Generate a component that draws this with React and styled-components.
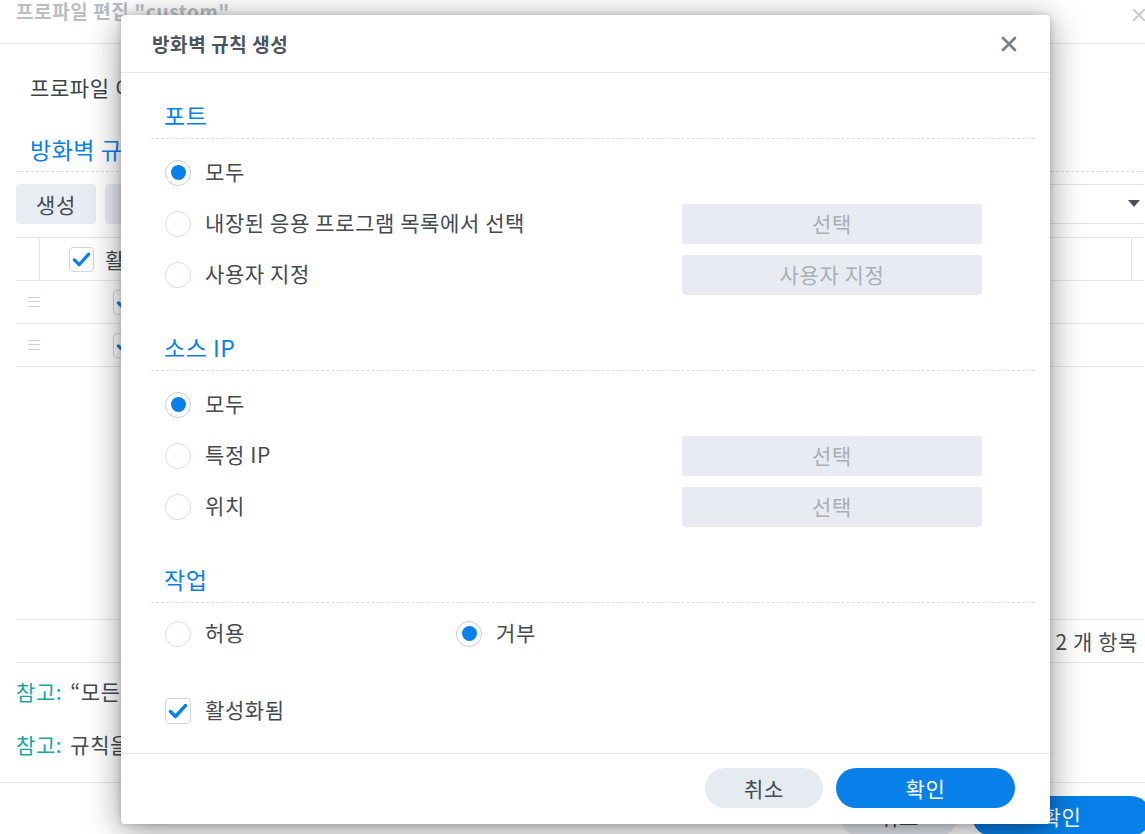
import React from "react";
import styled, { createGlobalStyle } from "styled-components";

const Global = createGlobalStyle`
  html, body { margin: 0; padding: 0; background: #fff; overflow: hidden; }
  body { font-family: "Noto Sans CJK KR", "Noto Sans", sans-serif; color: #434a52; }
  * { box-sizing: border-box; }
`;

const BLUE = "#0880ea";

/* ---------- background window ---------- */
const Page = styled.div`
  position: relative;
  width: 1145px;
  height: 834px;
  overflow: hidden;
`;

const BgWindow = styled.div`
  width: 1160px;
  height: 880px;
  display: flex;
  flex-direction: column;
`;

const BgHeader = styled.div`
  height: 44px;
  border-bottom: 1px solid #e3e7ec;
  display: flex;
  align-items: flex-start;
  justify-content: space-between;
  padding: 0 14px 0 16px;
`;

const BgTitle = styled.div`
  font-size: 19px;
  font-weight: 700;
  line-height: 22px;
  letter-spacing: 0.6px;
  color: #babec4;
`;

const BgClose = styled.div`
  margin-top: 8px;
  color: #c9cdd2;
  display: flex;
`;

const BgBody = styled.div`
  padding: 0 16px;
  display: flex;
  flex-direction: column;
`;

const BgText = styled.div`
  margin: 29px 0 0 14px;
  font-size: 21px;
  letter-spacing: 0.6px;
  line-height: 28px;
  color: #3c424a;
`;

const BgSectionTitle = styled.div`
  margin-top: 33px;
  padding-left: 14px;
  font-size: 23px;
  letter-spacing: 0.5px;
  line-height: 30px;
  height: 38px;
  color: ${BLUE};
  border-bottom: 1px dashed #d6dde5;
`;

const Toolbar = styled.div`
  margin-top: 12px;
  height: 40px;
  display: flex;
  align-items: center;
  gap: 9px;
`;

const ToolButton = styled.div`
  width: 80px;
  height: 40px;
  border-radius: 4px;
  background: #e8edf3;
  font-size: 21px;
  letter-spacing: 0.6px;
  color: #434a52;
  display: flex;
  align-items: center;
  justify-content: center;
`;

const SelectBox = styled.div`
  margin-left: auto;
  width: 260px;
  height: 40px;
  border-top: 1px solid #dfe4ea;
  border-bottom: 1px solid #dfe4ea;
  display: flex;
  align-items: center;
  justify-content: flex-end;
  padding-right: 4px;
  color: #50565d;
`;

const TableArea = styled.div`
  margin-top: 13px;
  height: 383px;
  border-top: 1px solid #dfe4ea;
  border-bottom: 1px solid #e3e7ec;
`;

const TRow = styled.div`
  height: 43px;
  display: flex;
  align-items: center;
  border-bottom: 1px solid #e3e7ec;
`;

const HandleCell = styled.div`
  width: 24px;
  height: 100%;
  display: flex;
  align-items: center;
  justify-content: ${(p) => (p.$head ? "flex-start" : "flex-end")};
  ${(p) => (p.$head ? "border-right: 1px solid #e3e7ec;" : "")}
`;

const Handle = styled.div`
  width: 12px;
  height: 10px;
  border-top: 1.5px solid #cbd2da;
  border-bottom: 1.5px solid #cbd2da;
  position: relative;
  &::after {
    content: "";
    position: absolute;
    left: 0;
    right: 0;
    top: 3px;
    border-top: 1.5px solid #cbd2da;
  }
`;

const CheckCell = styled.div`
  display: flex;
  align-items: center;
  gap: 11px;
  padding-left: ${(p) => p.$pad}px;
  font-size: 21px;
  letter-spacing: 0.6px;
  color: #434a52;
`;

const ColLine = styled.div`
  margin-left: auto;
  margin-right: 12px;
  height: 100%;
  border-left: 1px solid #e3e7ec;
`;

const Pager = styled.div`
  height: 43px;
  border-bottom: 1px solid #dfe4ea;
  display: flex;
  align-items: center;
  justify-content: flex-end;
  padding-right: 6px;
  font-size: 21px;
  letter-spacing: 0.6px;
  color: #434a52;
`;

const Note = styled.div`
  margin-top: ${(p) => p.$mt}px;
  font-size: 21px;
  letter-spacing: 0.6px;
  line-height: 28px;
  color: #434a52;
  white-space: nowrap;
`;

const NoteLabel = styled.span`
  color: #17a7a7;
  margin-right: 8px;
`;

const BgFooter = styled.div`
  margin-top: 24px;
  border-top: 1px solid #e3e7ec;
  padding: 13px 9px 0 0;
  display: flex;
  justify-content: flex-end;
  gap: 14px;
`;

const PillButton = styled.div`
  width: ${(p) => p.$w}px;
  height: 40px;
  border-radius: 20px;
  background: ${(p) => (p.$primary ? BLUE : "#e6ebf2")};
  color: ${(p) => (p.$primary ? "#fff" : "#434a52")};
  font-size: 21px;
  letter-spacing: 0.6px;
  display: flex;
  align-items: center;
  justify-content: center;
`;

/* ---------- dialog ---------- */
const Dialog = styled.div`
  position: absolute;
  left: 121px;
  top: 15px;
  width: 929px;
  height: 809px;
  background: #fff;
  border-radius: 4px;
  box-shadow: 0 6px 34px rgba(0, 0, 0, 0.42), 0 0 6px rgba(0, 0, 0, 0.18);
  display: flex;
  flex-direction: column;
  overflow: hidden;
`;

const DialogHeader = styled.div`
  height: 58px;
  flex: none;
  border-bottom: 1px solid #e3e8ee;
  display: flex;
  align-items: center;
  justify-content: space-between;
  padding: 0 33px 0 31px;
`;

const DialogTitle = styled.div`
  font-size: 19px;
  font-weight: 700;
  letter-spacing: 0.6px;
  color: #4b535c;
`;

const CloseBtn = styled.div`
  display: flex;
  color: #7b828a;
`;

const DialogBody = styled.div`
  flex: 1;
  min-height: 0;
  padding: 20px 15px 0 30px;
`;

const Section = styled.div`
  margin-bottom: 25px;
  &:last-child {
    margin-bottom: 0;
  }
`;

const SectionTitle = styled.div`
  height: 46px;
  display: flex;
  align-items: center;
  padding: 0 0 2px 13px;
  font-size: 23px;
  line-height: 30px;
  letter-spacing: 0.5px;
  color: ${BLUE};
  border-bottom: 1px dashed #d6dde5;
`;

const RowList = styled.div`
  padding: ${(p) => p.$pt ?? 8}px 53px 0 14px;
`;

const Row = styled.div`
  height: 51px;
  display: flex;
  align-items: center;
  justify-content: space-between;
  margin-top: ${(p) => p.$mt || 0}px;
`;

const SplitRow = styled.div`
  height: 51px;
  display: grid;
  grid-template-columns: 291px auto;
  align-items: center;
`;

const Choice = styled.div`
  display: flex;
  align-items: center;
  gap: 14px;
  font-size: 21px;
  letter-spacing: 0.6px;
  line-height: 28px;
  color: #434a52;
`;

const Label = styled.span`
  padding-bottom: 3px;
`;

const RadioCircle = styled.span`
  width: 26px;
  height: 26px;
  border-radius: 50%;
  border: 1.5px solid ${(p) => (p.$on ? "#c5ccd4" : "#d5dde6")};
  display: flex;
  align-items: center;
  justify-content: center;
  flex: none;
  &::after {
    content: "";
    width: 15px;
    height: 15px;
    border-radius: 50%;
    background: ${(p) => (p.$on ? BLUE : "transparent")};
  }
`;

const CheckBox = styled.span`
  width: ${(p) => p.$size || 26}px;
  height: ${(p) => p.$size || 26}px;
  border-radius: 4px;
  border: 1.5px solid #cfd6df;
  display: flex;
  align-items: center;
  justify-content: center;
  flex: none;
  background: #fff;
`;

const ActionButton = styled.div`
  width: 300px;
  height: 40px;
  padding-bottom: 2px;
  border-radius: 4px;
  background: #e8ecf2;
  color: #a9afb6;
  font-size: 21px;
  letter-spacing: 0.6px;
  display: flex;
  align-items: center;
  justify-content: center;
`;

const DialogFooter = styled.div`
  height: 71px;
  flex: none;
  border-top: 1px solid #e3e8ee;
  display: flex;
  justify-content: flex-end;
  align-items: flex-start;
  gap: 13px;
  padding: 14px 35px 0 0;
`;

const XIcon = ({ size = 16, w = 2.6 }) => (
  <svg width={size} height={size} viewBox="0 0 16 16">
    <path d="M2 2 L14 14 M14 2 L2 14" stroke="currentColor" strokeWidth={w} strokeLinecap="round" fill="none" />
  </svg>
);

const Check = ({ size = 20 }) => (
  <svg width={size} height={size} viewBox="0 0 20 20">
    <path d="M2.5 10.5 L7.5 15.5 L17.5 4.5" stroke={BLUE} strokeWidth="3.4" strokeLinecap="round" strokeLinejoin="round" fill="none" />
  </svg>
);

const Caret = () => (
  <svg width="12" height="8" viewBox="0 0 12 8">
    <path d="M0 0 H12 L6 7 Z" fill="#4b5158" />
  </svg>
);

const Radio = ({ on, children }) => (
  <Choice>
    <RadioCircle $on={on} />
    <Label>{children}</Label>
  </Choice>
);

export default function App() {
  return (
    <Page>
      <Global />
      <BgWindow>
        <BgHeader>
          <BgTitle>프로파일 편집 "custom"</BgTitle>
          <BgClose>
            <XIcon size={14} w={2.4} />
          </BgClose>
        </BgHeader>
        <BgBody>
          <BgText>프로파일 이름: custom</BgText>
          <BgSectionTitle>방화벽 규칙</BgSectionTitle>
          <Toolbar>
            <ToolButton>생성</ToolButton>
            <ToolButton>편집</ToolButton>
            <SelectBox>
              <Caret />
            </SelectBox>
          </Toolbar>
          <TableArea>
            <TRow>
              <HandleCell $head />
              <CheckCell $pad={29}>
                <CheckBox $size={25}>
                  <Check size={19} />
                </CheckBox>
                활성화됨
              </CheckCell>
              <ColLine />
            </TRow>
            {[0, 1].map((i) => (
              <TRow key={i}>
                <HandleCell>
                  <Handle />
                </HandleCell>
                <CheckCell $pad={73}>
                  <CheckBox $size={25}>
                    <Check size={19} />
                  </CheckBox>
                  모두
                </CheckCell>
              </TRow>
            ))}
          </TableArea>
          <Pager>2 개 항목</Pager>
          <Note $mt={14}>
            <NoteLabel>참고:</NoteLabel>
            “모든 인터페이스”에 적용된 규칙이 우선적으로 적용됩니다.
          </Note>
          <Note $mt={25}>
            <NoteLabel>참고:</NoteLabel>
            규칙을 드래그하여 적용 순서를 변경할 수 있습니다.
          </Note>
        </BgBody>
        <BgFooter>
          <PillButton $w={118}>취소</PillButton>
          <PillButton $w={179} $primary>
            확인
          </PillButton>
        </BgFooter>
      </BgWindow>

      <Dialog>
        <DialogHeader>
          <DialogTitle>방화벽 규칙 생성</DialogTitle>
          <CloseBtn>
            <XIcon size={16} w={2.8} />
          </CloseBtn>
        </DialogHeader>
        <DialogBody>
          <Section>
            <SectionTitle>포트</SectionTitle>
            <RowList>
              <Row>
                <Radio on>모두</Radio>
              </Row>
              <Row>
                <Radio>내장된 응용 프로그램 목록에서 선택</Radio>
                <ActionButton>선택</ActionButton>
              </Row>
              <Row>
                <Radio>사용자 지정</Radio>
                <ActionButton>사용자 지정</ActionButton>
              </Row>
            </RowList>
          </Section>
          <Section>
            <SectionTitle>소스 IP</SectionTitle>
            <RowList>
              <Row>
                <Radio on>모두</Radio>
              </Row>
              <Row>
                <Radio>특정 IP</Radio>
                <ActionButton>선택</ActionButton>
              </Row>
              <Row>
                <Radio>위치</Radio>
                <ActionButton>선택</ActionButton>
              </Row>
            </RowList>
          </Section>
          <Section>
            <SectionTitle>작업</SectionTitle>
            <RowList $pt={5}>
              <SplitRow>
                <Radio>허용</Radio>
                <Radio on>거부</Radio>
              </SplitRow>
              <Row $mt={26}>
                <Choice>
                  <CheckBox>
                    <Check />
                  </CheckBox>
                  <Label>활성화됨</Label>
                </Choice>
              </Row>
            </RowList>
          </Section>
        </DialogBody>
        <DialogFooter>
          <PillButton $w={118}>취소</PillButton>
          <PillButton $w={179} $primary>
            확인
          </PillButton>
        </DialogFooter>
      </Dialog>
    </Page>
  );
}
